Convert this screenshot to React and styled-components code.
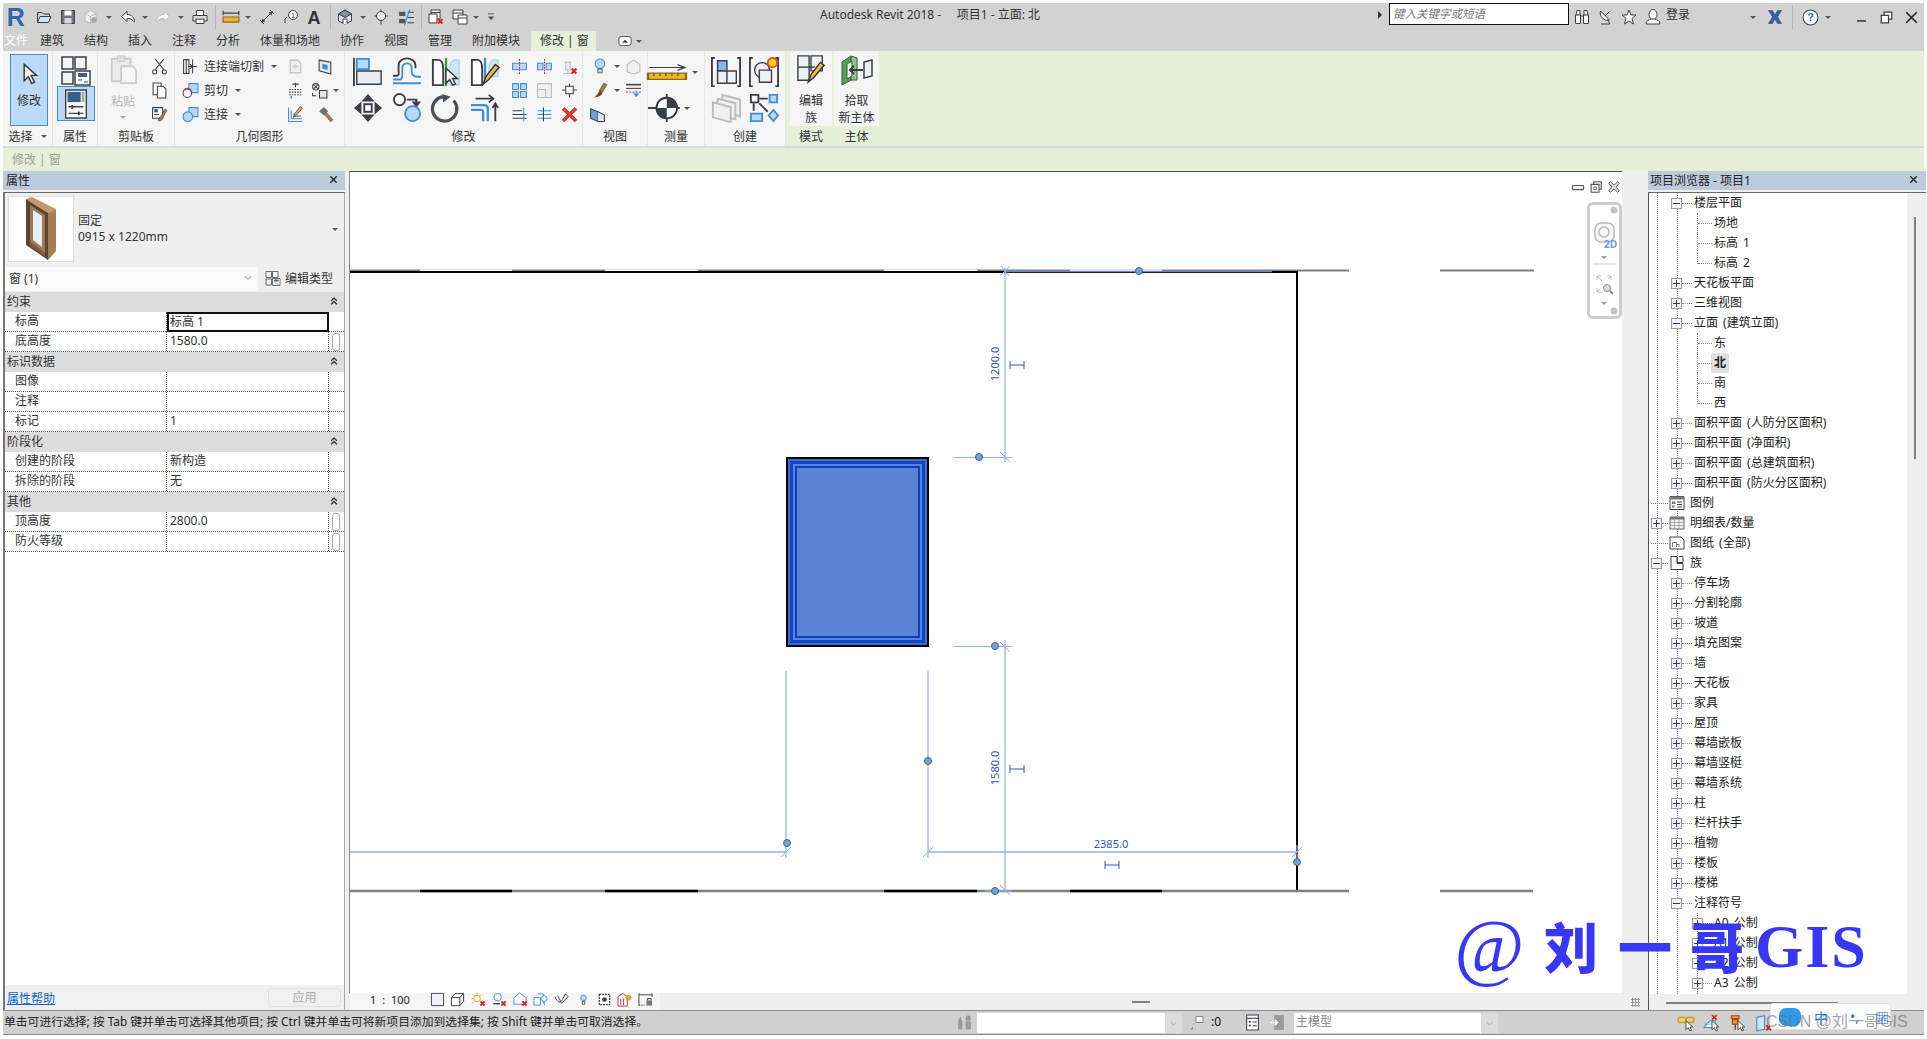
import React from 'react';
import styled, { createGlobalStyle } from 'styled-components';
import { ChevronDown, ChevronsUp, X } from 'lucide-react';

const FONT = `"Noto Sans", "Noto Sans CJK SC", sans-serif`;
const D = '#3c4046';
const B = '#3f8fd8';
const LB = '#b9d8f2';

const Global = createGlobalStyle`
  html, body { margin: 0; padding: 0; background: #fff; overflow: hidden; }
  body { font-family: ${FONT}; font-size: 12px; color: #222; }
  * { box-sizing: border-box; }
`;

const line = { fill: 'none', stroke: D, strokeWidth: 2 };
const box = { fill: '#fff', stroke: D, strokeWidth: 2 };
const blue = { fill: LB, stroke: B, strokeWidth: 2 };
const gray = { fill: '#f0f0f0', stroke: '#bbb', strokeWidth: 2 };
const cross = <path d="M20 20l9 9M29 20l-9 9" stroke="#e02424" strokeWidth="4" fill="none" />;
const pencil = <path d="M14 29l3-8L27 8l4 3-11 13z" fill="#f4b942" stroke="#333" strokeWidth="1.5" />;
const cur = <path d="M16 12v16l4-4 3 6 3-1-3-6h5z" fill="#fff" stroke="#333" strokeWidth="1.5" />;

const ICONS = {
  R: <text x="1" y="30" fontSize="40" fontWeight="700" fill="#2f6aa8" fontFamily="Liberation Sans">R</text>,
  open: <><path d="M3 27V7h9l3 3h12v5" {...line} /><path d="M3 27l5-12h22l-5 12z" fill="#d5e3ef" stroke={D} strokeWidth="2" /></>,
  save: <><path d="M3 3h26v26H3z" fill="#6f747a" stroke={D} strokeWidth="2" /><path d="M9 3h14v10H9z" fill="#fff" /><path d="M9 18h14v11H9z" fill="#d8d8d8" /></>,
  sync: <><path d="M15 3l11 6v14l-11 6-11-6V9z" {...gray} /><path d="M15 15l11-6M15 15L4 9M15 15v14" {...gray} /><circle cx="22" cy="22" r="6" fill="#aaa" /></>,
  undo: <path d="M14 5L3 15l11 10v-6c6 0 10 1 15 7 0-9-6-15-15-15z" {...box} />,
  redo: <path d="M18 5l11 10-11 10v-6c-6 0-10 1-15 7 0-9 6-15 15-15z" fill="#fff" stroke="#bbb" strokeWidth="2" />,
  print: <><path d="M9 13V3h14v10" {...box} /><path d="M2 13h28v11H2z" fill="#d8dde2" stroke={D} strokeWidth="2" /><path d="M8 20h16v9H8z" {...box} /></>,
  measure: <><path d="M2 9h28M2 5v8M30 5v8" {...line} /><path d="M2 16h28v9H2z" fill="#eab72c" stroke="#8a6a10" strokeWidth="2" /></>,
  dim: <><path d="M5 27L27 5" {...line} /><path d="M27 5l-8 2 6 6zM5 27l8-2-6-6z" fill={D} /><path d="M2 22l8 8M22 2l8 8" {...line} /></>,
  tag: <><path d="M4 28v-8l4-4" {...line} /><circle cx="20" cy="12" r="9" {...box} /><text x="20" y="17" fontSize="14" textAnchor="middle" fill={D} fontFamily="Liberation Sans">1</text></>,
  A: <text x="16" y="29" fontSize="36" fontWeight="700" textAnchor="middle" fill="#333" fontFamily="Liberation Sans">A</text>,
  house: <><path d="M16 2L3 10v14l13 6 13-6V10z" fill="#e2e6ea" stroke={D} strokeWidth="2" /><path d="M16 2L3 10l13 7 13-7z" fill="#8a9096" stroke={D} strokeWidth="2" /><path d="M12 30V20h8v10" {...box} /></>,
  section: <><circle cx="16" cy="14" r="9" fill="#e8e8e8" stroke={D} strokeWidth="2" /><path d="M16 1v4M16 23v8M2 14h4M26 14h4" {...line} /></>,
  thin: <><path d="M2 5h12v8H2zM2 19h12v8H2z" fill="#555" /><path d="M18 6h12M18 16h12M18 26h12" {...line} /><path d="M12 31L22 1" stroke={B} strokeWidth="2" /></>,
  closeHid: <><path d="M6 2h18v18H6z" {...box} /><path d="M6 7h18" {...line} /><path d="M2 10h16v18H2z" {...box} />{cross}</>,
  switchW: <><path d="M2 2h20v18H2z" {...box} /><path d="M2 8h20" {...line} /><path d="M12 12h18v18H12z" {...box} /><path d="M12 18h18" {...line} /></>,
  customize: <><path d="M6 6h20" stroke="#555" strokeWidth="3" /><path d="M6 14h20L16 26z" fill="#555" /></>,
  tabMin: <><rect x="2" y="6" width="28" height="20" rx="5" {...box} /><path d="M9 20l7-7 7 7z" fill={D} /></>,

  cursor: <path d="M9 2v24l6-6 5 10 4-2-5-10h8z" fill="#fff" stroke="#333" strokeWidth="2" />,
  typeProps: <><path d="M2 3h11v12H2zM15 3h11v12H15zM2 18h11v12H2z" fill="#f3f3f3" stroke={D} strokeWidth="1.5" /><path d="M15 17h15v14H15z" fill="#fff" stroke={D} strokeWidth="1.5" /><path d="M18 19h9v4h-9z" fill="#3a5e8c" /><path d="M18 26h4M24 28h4" stroke={D} /></>,
  propsPanel: <><path d="M5 1h22v30H5z" fill="#fff" stroke={D} strokeWidth="1.5" /><path d="M7 3h14v11H7z" fill="#3a5e8c" /><path d="M22 3h3v11h-3z" fill="#aaa" /><path d="M8 19h16M8 26h16" stroke={D} strokeWidth="1.5" /><path d="M12 17v4M19 24v4" stroke={D} strokeWidth="2" /></>,
  paste: <><path d="M4 5h20v24H4z" fill="#ececec" stroke="#ccc" strokeWidth="2" /><path d="M10 2h8v6h-8z" fill="#ddd" stroke="#ccc" /><path d="M14 13h12l4 4v14H14z" fill="#f6f6f6" stroke="#ccc" strokeWidth="2" /></>,
  scissors: <><path d="M8 2l16 20M24 2L8 22" {...line} /><circle cx="7" cy="26" r="4" {...box} /><circle cx="25" cy="26" r="4" {...box} /></>,
  copy: <><path d="M4 2h15v22H4z" {...box} /><path d="M12 8h11l5 5v17H12z" {...box} /></>,
  match: <><path d="M3 3h19v20H3z" {...box} /><path d="M6 6h7v6H6z" fill="#3a5e8c" /><path d="M6 16h9" {...line} /><path d="M14 28c4 1 7-1 8-5L30 8l-4-2-8 14c-3 1-4 4-4 8z" fill="#a9794a" stroke="#333" /></>,
  joinCut: <><path d="M3 3h10v26H3zM8 3v26" {...line} /><path d="M20 3v26M12 16h16M20 16l-5-4M20 16l-5 4" {...line} /></>,
  cutGeom: <><path d="M13 3h17v17H13z" {...blue} /><circle cx="10" cy="21" r="8" {...box} /><path d="M4 15a8 8 0 0 1 14 3" stroke="#e02424" strokeWidth="2.5" fill="none" /></>,
  joinGeom: <><path d="M13 3h17v17H13z" {...blue} /><circle cx="11" cy="20" r="9" {...blue} /></>,
  grayCut: <><path d="M6 4h14l6 6v18H6z" {...gray} /><path d="M22 16H12l4-4M12 16l4 4" stroke="#ccc" strokeWidth="2" fill="none" /></>,
  wallOpen: <><path d="M4 4l22 4v22L4 24z" fill="#dfe6ec" stroke={D} strokeWidth="2" /><path d="M10 11l10 2v9l-10-2z" fill={B} /></>,
  beam: <><path d="M16 2v8M10 4h12" stroke={D} strokeWidth="2" /><path d="M4 14h24M4 19h24M4 24h24" stroke={D} strokeWidth="2" strokeDasharray="3 2" /><path d="M8 26v5" stroke={B} strokeWidth="3" /></>,
  cutSwitch: <><circle cx="9" cy="9" r="6" {...box} /><path d="M5 5l8 8M13 5l-8 8" {...line} /><path d="M16 16h14v14H16z" fill="#e5e5e5" stroke={D} strokeWidth="2" /><path d="M3 20v6h7" {...line} /></>,
  wallPen: <><path d="M3 3v26h26" stroke={B} strokeWidth="2" fill="none" /><path d="M8 8v16h20M13 14v5h14" stroke={B} strokeWidth="2" fill="none" /><g transform="translate(-2,-7)">{pencil}</g></>,
  hammer: <><path d="M4 10l9-8 8 8-8 8z" fill="#6a6f75" /><path d="M14 16l4-4 12 14-4 4z" fill="#b0764a" stroke="#555" /></>,

  align: <><path d="M1 1v30" {...line} /><path d="M4 2h13v11H4z" {...blue} /><path d="M4 15h26v14H4z" fill="#e7ecf0" stroke={D} strokeWidth="1.5" /></>,
  offset: <><path d="M1 28h30M1 24h7c3 0 3-3 3-6v-6c0-7 10-7 10 0v3c0 5 3 6 6 6h4" stroke={B} strokeWidth="2" fill="none" /><path d="M1 20h4c3 0 2-3 2-6V9c0-10 18-10 18 0v3" stroke={D} strokeWidth="2" fill="none" /></>,
  mirrorPick: <><path d="M2 3h6c5 0 5 6 5 10v17H2z" {...box} /><path d="M16 1v30" stroke="#3f9a3f" strokeWidth="2.5" /><path d="M30 3h-6c-3 2-4 6-4 10v17h10z" fill="#cfe3f3" stroke="#9cc" />{cur}</>,
  mirrorDraw: <><path d="M2 3h6c5 0 5 6 5 10v17H2z" {...box} /><path d="M16 1v24" stroke={B} strokeWidth="2.5" /><path d="M30 3h-6c-3 2-4 6-4 10v8h10z" fill="#cfe3f3" stroke="#9cc" />{pencil}</>,
  split1: <><path d="M3 10h26v12H3z" {...blue} /><path d="M16 2v28" stroke="#e02424" strokeWidth="2" strokeDasharray="3 2" /></>,
  split2: <><path d="M3 10h10v12H3zM19 10h10v12H19z" {...blue} /><path d="M16 2v28" stroke="#e02424" strokeWidth="2" strokeDasharray="3 2" /></>,
  unpinG: <><path d="M6 8h14M9 8v14h8V8M13 22v7M4 29h18" {...gray} />{cross}</>,
  array: <path d="M3 3h11v11H3zM18 3h11v11H18zM3 18h11v11H3zM18 18h11v11H18z" {...blue} />,
  scale: <><path d="M3 3h26v26H3z" {...gray} /><path d="M3 14h15v15" {...gray} /></>,
  pin: <><path d="M9 8h14v14H9z" {...box} /><path d="M2 15h7M23 15h7M16 3v5M16 22v7" {...line} /></>,
  trim1: <><path d="M3 9h18M3 16h26M3 23h26" stroke={D} strokeWidth="2" /><path d="M24 3v26" stroke={B} strokeWidth="2" /></>,
  trim2: <><path d="M3 9h26M3 16h26M3 23h26" stroke={B} strokeWidth="2" /><path d="M14 3v26" stroke={D} strokeWidth="2" /></>,
  del: <path d="M6 3l10 9 10-9 4 4-10 9 10 10-4 4-10-10L6 30l-4-4 10-10L2 7z" fill="#ea3535" stroke="#a01010" />,
  move: <><path d="M16 1l7 8H9zM16 31l-7-8h14zM1 16l8-7v14zM31 16l-8 7V9z" fill={D} /><path d="M12 12h8v8h-8z" {...box} /></>,
  copyShape: <><circle cx="8" cy="7" r="6" {...box} /><path d="M16 7h10v5M26 14l-3-4h6z" {...line} /><circle cx="22" cy="22" r="8" {...blue} /></>,
  rotate: <><path d="M24 8a13 13 0 1 1-11-4" stroke="#4a4f55" strokeWidth="3.5" fill="none" /><path d="M12 1l9 3-8 6z" fill="#4a4f55" /></>,
  trimBig: <><path d="M1 13h14c3 0 4 1 4 4v13M1 18h11c2 0 2 1 2 3v9" stroke={B} strokeWidth="2.5" fill="none" /><path d="M6 6h18M20 2l5 4-5 4" {...line} /><path d="M27 30V12M24 16l3-5 3 5" {...line} /></>,
  bulb: <><circle cx="15" cy="11" r="9" {...blue} /><path d="M11 21h8v7h-8z" fill="#ddd" stroke={D} strokeWidth="1.5" /></>,
  gear3d: <path d="M4 12l12-8 12 8v14l-12 4-12-4z" {...gray} />,
  paint: <><path d="M22 2l6 3-8 14-6-3z" fill="#a9794a" stroke="#333" /><path d="M14 16l6 3c-1 7-8 10-16 10 4-3 7-6 10-13z" fill="#6b4a2a" /></>,
  lines: <><path d="M2 5h28" stroke={D} strokeWidth="3" /><path d="M2 12h28" stroke={D} strokeWidth="2" /><path d="M2 19h28" stroke={D} strokeWidth="1.5" strokeDasharray="4 2" /><path d="M21 16v10M16 22l5 6 5-6z" fill={B} stroke={B} /></>,
  viewRange: <><path d="M3 5l14 6v18L3 23z" fill="#6aa2d4" stroke={D} strokeWidth="2" /><path d="M17 11l12 6v12l-12 0" fill="#dfe6ec" stroke={D} strokeWidth="2" /></>,
  alignDim: <><path d="M1 8h30M25 3l6 5-6 5" {...line} /><path d="M0 18h32v11H0z" fill="#eab72c" stroke="#8a6a10" strokeWidth="2" /><path d="M5 18v5M10 18v5M15 18v5M20 18v5M25 18v5" stroke="#8a6a10" strokeWidth="1.5" /></>,
  spot: <><circle cx="20" cy="16" r="11" fill="#fff" stroke="#333" strokeWidth="2" /><path d="M20 5a11 11 0 0 1 11 11H20zM20 16v11A11 11 0 0 1 9 16z" fill="#3a4048" /><path d="M0 16h9M31 16h3M20 1v4M20 27v4" {...line} /></>,
  group: <><path d="M4 1H1v30h3M28 1h3v30h-3" {...line} /><path d="M7 4h10v11H7z" fill="#7fb9e6" stroke={D} strokeWidth="1.5" /><path d="M7 15h10v13H7zM17 15h10v13H17z" fill="#eef1f3" stroke={D} strokeWidth="1.5" /></>,
  compon: <><path d="M4 1H1v30h3M28 1h3v30h-3" {...line} /><circle cx="14" cy="14" r="8" fill="#f0f0f0" stroke={D} strokeWidth="1.5" /><path d="M11 14h13v13H11z" fill="#eef1f3" stroke={D} strokeWidth="1.5" /><circle cx="25" cy="6" r="5" fill="#f9d423" stroke="#e84a1a" strokeWidth="2" /></>,
  stack: <><path d="M12 2l19 5v18L12 20z" {...gray} /><path d="M7 6l19 5v17L7 24z" {...gray} /><path d="M2 10l19 5v16L2 26z" {...gray} /></>,
  groupFlow: <><path d="M2 2h8v8H2z" {...box} /><path d="M22 2h8v8h-8z" {...blue} /><path d="M11 6h9M5 11v8M11 11l9 9" {...line} /><path d="M2 22h12v8H2z" {...blue} /><path d="M26 18l5 6-5 6-5-6z" {...blue} /></>,
  editFam: <><path d="M2 2h12v26H2zM16 2h12v16H16z" fill="#eef1f3" stroke={D} strokeWidth="1.5" /><path d="M2 14h18" stroke={D} strokeWidth="1.5" /><g transform="translate(-1,1)">{pencil}</g></>,
  pickHost: <><path d="M1 8l9-6v24l-9 5z" fill="#5aa05a" stroke="#2d602d" /><path d="M10 2l6 2v22l-6 0z" fill="#8cc68c" stroke="#2d602d" /><path d="M6 10l5-3v15l-5 3z" fill="#fff" stroke="#2d602d" /><path d="M22 16H9M13 12l-4 4 4 4" {...line} /><path d="M23 8l8-2v16l-8 2z" fill="#eef1f3" stroke={D} strokeWidth="1.5" /></>,

  binoc: <><path d="M4 12l2-9h6v9zM20 12V3h6l2 9z" fill="#fff" stroke={D} strokeWidth="2" /><path d="M3 12h10v17H3zM19 12h10v17H19z" fill="#fff" stroke={D} strokeWidth="2" /><path d="M13 14h6" {...line} /></>,
  sat: <><path d="M7 4l18 18c-9 4-22-8-18-18z" fill="#fff" stroke={D} strokeWidth="2" /><path d="M16 14l9-9M8 30h18l-5-9" {...line} /></>,
  star: <path d="M16 2l4 10h10l-8 7 3 11-9-6-9 6 3-11-8-7h10z" {...box} />,
  user: <><ellipse cx="16" cy="11" rx="8" ry="10" {...box} /><path d="M2 30c0-7 6-8 10-10h8c4 2 10 3 10 10z" {...box} /></>,
  xchange: <path d="M3 3h8l5 9 5-9h8l-8 13 8 13h-8l-5-9-5 9H3l8-13z" fill="#3b5ea8" stroke="#1f3a78" />,
  help: <><circle cx="16" cy="16" r="14" fill="#fff" stroke={D} strokeWidth="2" /><text x="16" y="23" fontSize="20" fontWeight="700" textAnchor="middle" fill="#2a6cc4" fontFamily="Liberation Sans">?</text></>,
  minW: <path d="M3 26h26" stroke="#222" strokeWidth="4" />,
  restore: <><path d="M10 3h19v17H10z" {...box} strokeWidth="3" /><path d="M3 11h18v18H3z" {...box} strokeWidth="3" /></>,
  closeW: <path d="M3 3l26 26M29 3L3 29" stroke="#222" strokeWidth="4" />,

  cMin: <rect x="1" y="12" width="30" height="11" rx="2" fill="#f4f4f4" stroke="#555" strokeWidth="3" />,
  cRestore: <><path d="M10 2h20v20H10z" fill="#f4f4f4" stroke="#555" strokeWidth="3" /><path d="M3 9h21v21H3z" fill="#f4f4f4" stroke="#555" strokeWidth="3" /><path d="M10 16h7v7h-7z" fill="none" stroke="#555" strokeWidth="2" /></>,
  cClose: <path d="M6 2l10 9 10-9 4 4-9 10 9 10-4 4-10-9-10 9-4-4 9-10-9-10z" fill="#e4e4e4" stroke="#555" strokeWidth="2.5" />,

  legend: <><path d="M2 3h28v26H2z" {...box} /><path d="M2 3h28v6H2z" fill="#777" /><path d="M6 13h7v5H6zM6 21h5v4H6z" fill="#777" /><path d="M16 14h10M16 19h10M16 24h10" {...line} /></>,
  sched: <><path d="M2 4h28v24H2z" fill="#eee" stroke="#666" strokeWidth="2" /><path d="M2 4h28v5H2z" fill="#777" /><path d="M2 15h28M2 21h28M11 9v19M20 9v19" stroke="#999" strokeWidth="1.5" /></>,
  sheet: <><path d="M2 4h22l6 6v18H2z" {...box} /><path d="M7 24v-9h8v9M15 19h5v5" stroke="#777" strokeWidth="2" fill="none" /></>,
  family: <><path d="M6 3h10v12h12V3h-8" {...line} /><path d="M4 3h12v14h12v12H4z" fill="#fff" stroke={D} strokeWidth="2" /></>,

  tools: <><path d="M4 14l4-10 4 10v15H4zM18 14h10v15H18z" fill="#999" /><circle cx="23" cy="8" r="5" fill="#999" /></>,
  worksets: <><path d="M14 3h14v12H14z" fill="#fff" stroke="#888" strokeWidth="2" /><path d="M14 15l-6 8v6H2l6-6z" fill="#888" /></>,
  modelList: <><path d="M5 2h22v28H5z" {...box} /><path d="M5 8h22" {...line} /><path d="M9 13h4v3H9zM9 20h4v3H9z" fill={D} /><path d="M16 15h8M16 22h8" {...line} /></>,
  door: <><path d="M10 2h18v28H10z" fill="#999" /><path d="M2 16h14M11 11l5 5-5 5" stroke="#fff" strokeWidth="3" fill="none" /></>,
  tr1: <><rect x="2" y="6" width="14" height="9" rx="4" fill="none" stroke="#d8a800" strokeWidth="3" /><rect x="16" y="6" width="14" height="9" rx="4" fill="none" stroke="#d8a800" strokeWidth="3" />{cur}</>,
  tr2: <><path d="M2 24l10-12h10v12z" fill="#fff" stroke={B} strokeWidth="2" /><path d="M2 18h20" stroke={B} /><path d="M16 2l8 8M24 2l-8 8" stroke="#e02424" strokeWidth="3" />{cur}</>,
  tr3: <><path d="M4 3h14v5H4zM6 10h10v8H6z" fill="#f0a030" stroke="#b04010" strokeWidth="2" /><path d="M11 18v10" stroke="#333" strokeWidth="2" />{cur}</>,
  tr4: <><path d="M3 6l14-3v24l-14 3z" fill="#cfe3f3" stroke={B} strokeWidth="2" />{cross}</>,

  vDetail: <><path d="M3 3h26v26H3z" fill="#eef2f6" stroke={D} strokeWidth="2" /></>,
  vCube: <><path d="M3 12h18v17H3z" {...box} /><path d="M3 12l8-9h18l-8 9M29 3v17l-8 9" {...line} /></>,
  vSun: <><circle cx="13" cy="14" r="7" fill="#fff" stroke="#e8a000" strokeWidth="2" /><path d="M13 1v4M1 14h4M4 5l3 3M22 5l-3 3M4 23l3-3" stroke="#e8a000" strokeWidth="2" />{cross}</>,
  vShadow: <><circle cx="12" cy="11" r="8" fill="#fff" stroke={B} strokeWidth="2" /><path d="M3 25h14" stroke={D} strokeWidth="3" />{cross}</>,
  vCrop: <><path d="M2 12L14 2l14 10v14H2z" fill="#fff" stroke={B} strokeWidth="2" />{cross}</>,
  vCrop2: <><path d="M2 12h14v16H2z" fill="#fff" stroke={B} strokeWidth="2" /><path d="M10 4h12v20" stroke={B} strokeWidth="2" fill="none" /><circle cx="24" cy="14" r="6" fill="#fff" stroke={B} strokeWidth="2" /><path d="M24 20v8" stroke={B} strokeWidth="2" /></>,
  vPath: <path d="M2 10c6 14 12 14 16 6l6-12 6 6-14 14L8 8" {...line} />,
  vBulb: <><circle cx="16" cy="12" r="7" {...blue} /><path d="M13 20h6v8h-6z" {...box} /></>,
  vRender: <><path d="M5 5h22v22H5z" fill="#fff" stroke={D} strokeWidth="3" strokeDasharray="4 2" /><circle cx="16" cy="16" r="5" fill={D} /></>,
  vHide: <><path d="M2 30V10l10-7 10 7v20z" fill="#fff" stroke="#c03030" strokeWidth="2" /><path d="M8 14v14M14 14v14" stroke="#c03030" strokeWidth="2" /><circle cx="24" cy="12" r="6" fill="#f0a030" /></>,
  vLock: <><path d="M2 3v26M30 3v8M2 6h28" stroke={D} strokeWidth="2" /><path d="M2 28h12" stroke={D} strokeWidth="2" strokeDasharray="3 2" /><path d="M18 18h12v11H18z" fill="#777" /><path d="M20 18v-4h8v4" {...line} /></>,
};

const Svg = styled.svg`
  display: block;
  flex: none;
  overflow: visible;
`;
const Ic = ({ n, w = 16, h, stretch }) => (
  <Svg width={w} height={h || w} viewBox="0 0 32 32" preserveAspectRatio={stretch ? 'none' : undefined}>
    {ICONS[n]}
  </Svg>
);
const Tri = styled.i`
  display: block;
  flex: none;
  width: 0;
  height: 0;
  border-left: 3px solid transparent;
  border-right: 3px solid transparent;
  border-top: 3px solid ${p => p.$c || '#555'};
`;

const Strip = styled.div`
  display: flex;
  align-items: center;
  height: ${p => p.$h || 28}px;
`;
const Slot = styled.div`
  flex: none;
  display: flex;
  align-items: center;
  justify-content: center;
  width: ${p => p.$w}px;
  margin-left: ${p => p.$ml}px;
`;
const Sep = styled.div`
  width: 1px;
  height: 24px;
  background: #b4b4b4;
`;
const IconStrip = ({ start, items, h }) => {
  let end = start;
  return (
    <Strip $h={h}>
      {items.map(([cx, n, w = 16, ih], i) => {
        const ml = cx - w / 2 - end;
        end = cx + w / 2;
        return (
          <Slot key={i} $w={w} $ml={ml}>
            {n === 'dd' ? <Tri /> : n === 'sep' ? <Sep /> : <Ic n={n} w={w} h={ih} />}
          </Slot>
        );
      })}
    </Strip>
  );
};

const Frame = styled.div`
  position: relative;
  width: 1927px;
  height: 1039px;
  padding: 3px 3px 3px 3px;
  background: #fff;
  overflow: hidden;
`;
const TitleBar = styled.div`
  position: relative;
  height: 28px;
  display: flex;
  align-items: center;
  background: #d2d2d2;
`;
const Title = styled.div`
  position: absolute;
  left: 817px;
  top: 2px;
  white-space: pre;
  font-size: 12px;
  line-height: 20px;
  color: #333;
`;
const SearchArrow = styled.i`
  position: absolute;
  left: 1375px;
  top: 8px;
  border-left: 4px solid #333;
  border-top: 4px solid transparent;
  border-bottom: 4px solid transparent;
`;
const Search = styled.div`
  position: absolute;
  left: 1386px;
  top: 0;
  width: 180px;
  height: 22px;
  border: 1px solid #111;
  background: #fff;
  padding-left: 3px;
  font-style: italic;
  font-size: 11.5px;
  line-height: 20px;
  color: #777;
`;
const Login = styled.span`
  position: absolute;
  left: 1663px;
  top: 2px;
  line-height: 20px;
  color: #333;
`;
const Tabs = styled.div`
  height: 20px;
  display: flex;
  background: #d2d2d2;
  padding-left: 1px;
`;
const Tab = styled.div`
  width: ${p => p.$w}px;
  flex: none;
  line-height: 20px;
  font-size: 12px;
  white-space: pre;
  color: ${p => (p.$file ? '#fff' : '#333')};
  background: ${p => (p.$on ? '#e6efd8' : 'transparent')};
  padding-left: ${p => (p.$on ? 9 : 0)}px;
`;
const TabExtra = styled.div`
  display: flex;
  align-items: center;
  gap: 4px;
  margin-left: 22px;
`;
const Ribbon = styled.div`
  display: flex;
  height: 95px;
  background: #e6efd8;
`;
const Panel = styled.div`
  flex: none;
  width: ${p => p.$w}px;
  margin-left: ${p => p.$ml || 0}px;
  display: flex;
  flex-direction: column;
  background: #f5f5f5;
  border-right: ${p => (p.$ctx ? 'none' : '1px solid #e6e6e6')};
`;
const PanelBody = styled.div`
  height: 75px;
  display: flex;
  padding: 3px 0 0 ${p => p.$pl || 0}px;
`;
const PanelLabel = styled.div`
  height: 20px;
  display: flex;
  align-items: center;
  justify-content: center;
  gap: 8px;
  font-size: 12px;
  color: #333;
  background: ${p => (p.$ctx ? '#e6efd8' : 'transparent')};
`;
const BigBtn = styled.div`
  width: ${p => p.$w}px;
  height: ${p => p.$h}px;
  display: flex;
  flex-direction: column;
  align-items: center;
  justify-content: ${p => (p.$center ? 'center' : 'flex-start')};
  padding-top: ${p => (p.$center ? 0 : 8)}px;
  gap: 6px;
  margin-left: ${p => p.$ml || 0}px;
  background: ${p => (p.$on ? '#bcd9f5' : 'transparent')};
  border: 1px solid ${p => (p.$on ? '#3f8fd8' : 'transparent')};
  color: #333;
`;
const StackCol = styled.div`
  display: flex;
  flex-direction: column;
  align-items: center;
  width: ${p => p.$w}px;
  flex: none;
`;
const TextBtn = styled.div`
  display: flex;
  flex-direction: column;
  align-items: center;
  line-height: 17px;
  margin-top: ${p => p.$mt || 0}px;
  color: ${p => (p.$dis ? '#b5b5b5' : '#333')};
`;
const DisTri = styled(Tri)`
  margin-top: 6px;
`;
const TextTri = styled(Tri)`
  margin-left: 2px;
`;
const ToolCol = styled.div`
  flex: none;
  width: ${p => p.$w}px;
  margin-left: ${p => p.$ml || 0}px;
  display: flex;
  flex-direction: column;
`;
const ToolRow = styled.div`
  height: 24px;
  display: flex;
  align-items: center;
  justify-content: ${p => (p.$left ? 'flex-start' : 'center')};
  gap: ${p => p.$gap ?? 5}px;
  white-space: nowrap;
  color: #333;
`;
const BigGrid = styled.div`
  flex: none;
  display: grid;
  grid-template-columns: repeat(${p => p.$cols}, ${p => p.$cw}px);
  grid-auto-rows: 36px;
  align-items: center;
  justify-items: ${p => p.$ji || 'center'};
`;
const BigCell = styled.div`
  display: flex;
  align-items: center;
  gap: 6px;
`;
const Options = styled.div`
  height: 25px;
  background: #e6efd8;
  border-top: 2px solid #d8d8d8;
  padding-left: 9px;
  line-height: 23px;
  font-size: 12px;
  color: #a0a0a0;
  white-space: pre;
`;
const Main = styled.div`
  height: 839px;
  display: flex;
  background: #efefef;
`;
const Dock = styled.div`
  flex: none;
  width: ${p => p.$w}px;
  display: flex;
  flex-direction: column;
  height: 839px;
`;
const DockHead = styled.div`
  height: 19px;
  flex: none;
  display: flex;
  align-items: center;
  justify-content: space-between;
  padding: 0 ${p => p.$pr}px 2px ${p => p.$pl || 4}px;
  background: #bccbdb;
  font-size: 12px;
  color: #222;
`;
const PropsBody = styled.div`
  flex: 1;
  min-height: 0;
  margin-top: 2px;
  border-top: 1px solid #666;
  border-left: 2px solid #777;
  border-right: 1px solid #aaa;
  display: flex;
  flex-direction: column;
  background: #fff;
`;
const TypeSel = styled.div`
  height: 72px;
  flex: none;
  display: flex;
  align-items: center;
  padding: 0 6px 0 3px;
  gap: 4px;
  background: #efefef;
`;
const Thumb = styled.div`
  width: 66px;
  height: 66px;
  background: #fff;
  border: 1px solid #ddd;
  display: flex;
  align-items: center;
  justify-content: center;
`;
const TypeName = styled.div`
  flex: 1;
  line-height: 16px;
  padding-left: 0;
  color: #333;
`;
const FilterRow = styled.div`
  height: 27px;
  flex: none;
  display: flex;
  align-items: flex-start;
  background: #efefef;
  padding-top: 2px;
`;
const FilterSel = styled.div`
  width: 253px;
  height: 24px;
  background: #fafafa;
  display: flex;
  align-items: center;
  justify-content: space-between;
  padding: 0 4px 2px;
  color: #333;
`;
const EditType = styled.div`
  display: flex;
  align-items: center;
  gap: 4px;
  margin-left: 7px;
  height: 22px;
  color: #333;
`;
const GroupRow = styled.div`
  height: 20px;
  flex: none;
  display: flex;
  align-items: center;
  justify-content: space-between;
  padding: 0 4px 2px 2px;
  background: #dcdcdc;
  color: #333;
`;
const PropRow = styled.div`
  height: 20px;
  flex: none;
  display: grid;
  grid-template-columns: 162px 162px 13px;
  border-bottom: 1px dotted #555;
  color: #333;
`;
const NameCell = styled.div`
  padding-left: 10px;
  line-height: 17px;
  border-right: 1px dotted #555;
`;
const ValCell = styled.div`
  padding-left: ${p => (p.$active ? 1 : 3)}px;
  line-height: ${p => (p.$active ? 15 : 17)}px;
  border-right: 1px dotted #555;
  ${p => p.$active && 'border: 2px solid #111; height: 20px; background:#fff;'}
`;
const KnobCell = styled.div`
  display: flex;
  align-items: center;
  justify-content: center;
`;
const Knob = styled.div`
  width: 8px;
  height: 18px;
  border: 1px solid #aaa;
  border-radius: 3px;
  background: #fff;
`;
const PropsSpacer = styled.div`
  flex: 1;
  background: #fff;
`;
const PropsFoot = styled.div`
  height: 25px;
  flex: none;
  display: flex;
  align-items: center;
  justify-content: space-between;
  padding: 0 3px 0 2px;
  background: #f0f0f0;
`;
const HelpLink = styled.span`
  color: #0a66c8;
  text-decoration: underline;
`;
const Apply = styled.div`
  width: 73px;
  height: 19px;
  border: 1px solid #e2e2e2;
  border-radius: 3px;
  text-align: center;
  line-height: 17px;
  color: #aaa;
`;
const CanvasCol = styled.div`
  flex: none;
  width: 1301px;
  margin-left: 2px;
  display: flex;
  flex-direction: column;
`;
const Canvas = styled.div`
  position: relative;
  margin-left: 2px;
  width: 1273px;
  height: 822px;
  background: #fff;
  border-top: 1px solid #555;
  border-left: 1px solid #888;
`;
const ViewBar = styled.div`
  height: 17px;
  display: flex;
  align-items: center;
  margin-left: 3px;
  position: relative;
`;
const ViewLeft = styled.div`
  width: 310px;
  height: 17px;
  padding-bottom: 4px;
  background: #f6f6f6;
  display: flex;
  align-items: center;
  font-size: 11px;
  color: #222;
  white-space: pre;
`;
const ScaleText = styled.span`
  width: 78px;
  padding-left: 20px;
  flex: none;
  word-spacing: 3px;
`;
const MiniDash = styled.div`
  width: 18px;
  height: 2px;
  background: #808080;
  margin-left: 472px;
`;
const Grip = styled.div`
  position: absolute;
  right: 8px;
  top: 5px;
  width: 9px;
  height: 9px;
  background-image: radial-gradient(#999 1px, transparent 1.2px);
  background-size: 3px 3px;
`;
const WinCtl = styled.div`
  position: absolute;
  right: 2px;
  top: 9px;
  display: flex;
  align-items: center;
  gap: 6px;
`;
const NavBar = styled.div`
  position: absolute;
  right: 0;
  top: 30px;
  width: 35px;
  height: 117px;
  border: 3px solid #ccc;
  border-radius: 6px;
  background: #fff;
`;
const BrowserBody = styled.div`
  flex: 1;
  min-height: 0;
  margin-top: 2px;
  border-top: 1px solid #666;
  border-left: 1px solid #555;
  display: flex;
  flex-direction: column;
  position: relative;
`;
const BrowserTop = styled.div`
  height: 801px;
  display: flex;
  flex: none;
`;
const Tree = styled.div`
  position: relative;
  width: 258px;
  flex: none;
  background: #fff;
  overflow: hidden;
`;
const VGutter = styled.div`
  flex: 1;
  position: relative;
  background: #efefef;
`;
const VThumb = styled.div`
  position: absolute;
  left: 7px;
  top: 24px;
  width: 2px;
  height: 242px;
  background: #808080;
`;
const HGutter = styled.div`
  flex: 1;
  background: #efefef;
  padding: 8px 0 0 17px;
`;
const HThumb = styled.div`
  width: 172px;
  height: 2px;
  background: #808080;
`;
const Guide = styled.div`
  position: absolute;
  left: ${p => p.$x}px;
  top: ${p => p.$top}px;
  bottom: 0;
  border-left: 1px dotted #888;
`;
const TreeRow = styled.div`
  height: 20px;
  display: flex;
  align-items: center;
  padding-left: ${p => p.$pl}px;
  white-space: pre;
  color: #1c1c1c;
  position: relative;
`;
const Exp = styled.div`
  flex: none;
  width: 11px;
  height: 11px;
  border: 1px solid #999;
  background: #f4f4f4;
  position: relative;
  &::before {
    content: '';
    position: absolute;
    left: 1px;
    right: 1px;
    top: 4px;
    height: 1px;
    background: #2a3c78;
  }
  ${p =>
    p.$plus &&
    `&::after { content: ''; position: absolute; top: 1px; bottom: 1px; left: 4px; width: 1px; background: #2a3c78; }`}
`;
const Conn = styled.div`
  flex: none;
  width: ${p => p.$w}px;
  border-top: 1px dotted #888;
  margin-right: ${p => p.$mr ?? 2}px;
`;
const Leaf = styled.div`
  flex: none;
  align-self: flex-start;
  position: relative;
  width: 15px;
  height: ${p => (p.$last ? 11 : 20)}px;
  border-left: 1px dotted #888;
  margin-right: 2px;
  &::after {
    content: '';
    position: absolute;
    left: 0;
    top: 10px;
    width: 14px;
    border-top: 1px dotted #888;
  }
`;
const Sel = styled.span`
  background: ${p => (p.$on ? '#e0e0e0' : 'transparent')};
  font-weight: ${p => (p.$on ? 700 : 400)};
  line-height: 20px;
  word-spacing: 2px;
  padding: 0 3px 0 ${p => (p.$on ? 3 : 0)}px;
  margin-left: ${p => (p.$on ? -3 : 0)}px;
`;
const Status = styled.div`
  position: relative;
  height: 25px;
  display: flex;
  align-items: center;
  background: #d0d0d0;
  border-top: 1px solid #8c8c8c;
  border-bottom: 1px solid #8c8c8c;
`;
const StatusText = styled.div`
  position: absolute;
  left: 1px;
  top: 0;
  line-height: 21px;
  white-space: pre;
  font-size: 11.8px;
  color: #222;
`;
const StatusInput = styled.div`
  position: absolute;
  top: 2px;
  left: ${p => p.$x}px;
  width: ${p => p.$w}px;
  height: 20px;
  background: #fff;
  padding-left: 2px;
  line-height: 18px;
  color: #888;
`;
const StatusDrop = styled.div`
  position: absolute;
  top: 2px;
  left: ${p => p.$x}px;
  width: 17px;
  height: 20px;
  background: #dcdcdc;
  display: flex;
  align-items: center;
  justify-content: center;
  color: #aaa;
`;
const Zero = styled.span`
  position: absolute;
  left: 1208px;
  top: 0;
  line-height: 21px;
  color: #111;
`;
const Stamp = styled.div`
  position: absolute;
  left: 1454px;
  top: 911px;
  display: flex;
  align-items: center;
  color: #3737f5;
  white-space: pre;
  line-height: 70px;
  height: 70px;
`;
const StampAt = styled.span`
  font-family: "Liberation Serif", serif;
  font-style: italic;
  font-size: 76px;
  line-height: 70px;
  width: 90px;
`;
const StampCn = styled.span`
  font-family: "Noto Sans CJK SC", sans-serif;
  font-weight: 900;
  font-size: 54px;
  line-height: 70px;
  width: ${p => p.$w}px;
  flex: none;
`;
const StampLatin = styled.span`
  font-family: "Liberation Serif", serif;
  font-weight: 700;
  font-size: 62px;
  line-height: 70px;
  letter-spacing: 2px;
`;
const ImeBar = styled.div`
  position: absolute;
  left: 1770px;
  top: 1003px;
  width: 121px;
  height: 27px;
  display: flex;
  align-items: center;
  background: #fff;
  border: 1px solid #e4e4e4;
  border-radius: 3px;
  color: #1677e5;
  font-size: 14px;
`;
const ImeBlob = styled.div`
  width: 22px;
  height: 18px;
  border-radius: 7px;
  background: #2e9bf0;
  margin: 0 13px 0 8px;
`;
const ImeDot = styled.span`
  margin: 0 16px 0 22px;
`;
const Csdn = styled.div`
  position: absolute;
  left: 1766px;
  top: 1009px;
  font-size: 16px;
  line-height: 26px;
  white-space: pre;
  color: rgba(110, 110, 110, 0.65);
  font-family: "Liberation Sans", "Noto Sans CJK SC", sans-serif;
`;
const DrawSvg = styled.svg`
  display: block;
`;

const tabs = [
  ['文件', 36, 1], ['建筑', 44], ['结构', 44], ['插入', 44], ['注释', 44], ['分析', 44], ['体量和场地', 80],
  ['协作', 44], ['视图', 44], ['管理', 44], ['附加模块', 59],
];

const propsData = [
  { g: '约束' },
  { n: '标高', v: '标高 1', active: true },
  { n: '底高度', v: '1580.0', knob: true },
  { g: '标识数据' },
  { n: '图像' },
  { n: '注释' },
  { n: '标记', v: '1' },
  { g: '阶段化' },
  { n: '创建的阶段', v: '新构造' },
  { n: '拆除的阶段', v: '无' },
  { g: '其他' },
  { n: '顶高度', v: '2800.0', knob: true },
  { n: '防火等级', knob: true },
];

const L2 = (t, plus = true) => ({ t, k: 'l2', plus });
const L3 = (t, extra) => ({ t, k: 'l3', ...extra });
const T3 = t => ({ t, k: 't3' });
const L1 = (t, icon, plus) => ({ t, k: 'l1', icon, plus });
const treeData = [
  L2('楼层平面', false), L3('场地'), L3('标高 1'), L3('标高 2', { last: true }),
  L2('天花板平面'), L2('三维视图'), L2('立面 (建筑立面)', false),
  L3('东'), L3('北', { on: true }), L3('南'), L3('西', { last: true }),
  L2('面积平面 (人防分区面积)'), L2('面积平面 (净面积)'), L2('面积平面 (总建筑面积)'), L2('面积平面 (防火分区面积)'),
  L1('图例', 'legend'), L1('明细表/数量', 'sched', true), L1('图纸 (全部)', 'sheet'), L1('族', 'family', false),
  L2('停车场'), L2('分割轮廓'), L2('坡道'), L2('填充图案'), L2('墙'), L2('天花板'), L2('家具'), L2('屋顶'),
  L2('幕墙嵌板'), L2('幕墙竖梃'), L2('幕墙系统'), L2('柱'), L2('栏杆扶手'), L2('植物'), L2('楼板'), L2('楼梯'),
  L2('注释符号', false), T3('A0 公制'), T3('A1 公制'), T3('A2 公制'), T3('A3 公制'),
];

const TreeItem = ({ r }) => {
  if (r.k === 'l2')
    return (
      <TreeRow $pl={22}>
        <Exp $plus={r.plus} />
        <Conn $w={10} />
        <Sel>{r.t}</Sel>
      </TreeRow>
    );
  if (r.k === 'l3')
    return (
      <TreeRow $pl={48}>
        <Leaf $last={r.last} />
        <Sel $on={r.on}>{r.t}</Sel>
      </TreeRow>
    );
  if (r.k === 't3')
    return (
      <TreeRow $pl={43}>
        <Exp $plus />
        <Conn $w={9} />
        <Sel>{r.t}</Sel>
      </TreeRow>
    );
  return (
    <TreeRow $pl={2}>
      {r.plus === undefined ? <Conn $w={17} $mr={1} /> : <><Exp $plus={r.plus} /><Conn $w={6} $mr={1} /></>}
      <Ic n={r.icon} w={16} />
      <Conn $w={0} $mr={5} />
      <Sel>{r.t}</Sel>
    </TreeRow>
  );
};

const DIM = '#8fb0f5';
const DIMT = '#2c55c4';
const Dot = ({ x, y }) => <circle cx={x} cy={y} r="3.5" fill="#6fa3e0" stroke="#56606c" strokeWidth="1" />;
const Tick = ({ x, y }) => <path d={`M${x - 5} ${y + 5}L${x + 5} ${y - 5}`} stroke={DIM} strokeWidth="1" />;
const EqV = ({ x, y }) => <path d={`M${x - 7} ${y - 4}v8M${x + 7} ${y - 4}v8M${x - 7} ${y}h14`} stroke={DIMT} strokeWidth="1" fill="none" />;

const Drawing = () => (
  <DrawSvg width="1272" height="821" viewBox="350 172 1272 821">
    <path d="M350 270.5H1349" stroke="#808080" strokeWidth="2" />
    <path d="M420 270.5H512M605 270.5H698M884 270.5H977M1070 270.5H1162" stroke="#fff" strokeWidth="2" />
    <path d="M350 272H1297" stroke="#000" strokeWidth="2" />
    <path d="M1440 270.5H1534" stroke="#808080" strokeWidth="2" />
    <path d="M1005 271.5H1272" stroke="#5f86da" strokeWidth="1.5" />
    <path d="M1297 271V890" stroke="#000" strokeWidth="2" />
    <path d="M350 891H1349M1440 891H1533" stroke="#808080" strokeWidth="2.5" />
    <path d="M420 891H512M605 891H698M884 891H977M1070 891H1162" stroke="#000" strokeWidth="2.5" />

    <rect x="786" y="457" width="143" height="190" fill="#000" />
    <rect x="788" y="459" width="139" height="186" fill="#3d6cc8" />
    <rect x="790" y="461" width="135" height="182" fill="#0f46c4" />
    <rect x="793" y="464" width="129" height="176" fill="#5b82d4" />
    <rect x="795" y="466" width="125" height="172" fill="#0b3fc4" />
    <rect x="797" y="468" width="121" height="168" fill="#5b82d4" />

    <g stroke={DIM} strokeWidth="1.2" fill="none">
      <path d="M1005 268V462M953 457.5H1012M953 646.5H1012M1005 640V890" />
      <path d="M350 852H786M928 852H1297" strokeWidth="1.5" />
      <path d="M786 671V858M928 671V858M1297 845V858" />
      <path d="M985 891H1012" />
    </g>
    <Tick x={1005} y={271} />
    <path d="M1001 266l8 10M1000 452l10 10M1000 642l10 10M1000 885l10 10" stroke={DIM} strokeWidth="1" />
    <Tick x={786} y={852} /><Tick x={928} y={852} /><Tick x={1297} y={852} />
    <Dot x={1139} y={271} /><Dot x={979} y={457} /><Dot x={995} y={646} /><Dot x={995} y={891} />
    <Dot x={787} y={843} /><Dot x={928} y={761} /><Dot x={1297} y={862} />

    <text x="0" y="0" transform="translate(999 364) rotate(-90)" textAnchor="middle" fontSize="11" fill={DIMT} fontFamily="Noto Sans">1200.0</text>
    <text x="0" y="0" transform="translate(999 768) rotate(-90)" textAnchor="middle" fontSize="11" fill={DIMT} fontFamily="Noto Sans">1580.0</text>
    <text x="1111" y="848" textAnchor="middle" fontSize="11" fill={DIMT} fontFamily="Noto Sans">2385.0</text>
    <EqV x={1017} y={365} /><EqV x={1017} y={769} /><EqV x={1112} y={865} />
  </DrawSvg>
);

const NavArt = () => (
  <DrawSvg width="29" height="111" viewBox="0 0 29 111">
    <circle cx="24" cy="5" r="3.5" fill="#c4c4c4" />
    <rect x="5" y="18" width="19" height="19" rx="6" fill="#f4f4f4" stroke="#bbb" strokeWidth="1.5" />
    <circle cx="14" cy="27" r="5" fill="none" stroke="#bbb" strokeWidth="1.5" />
    <text x="14" y="43" fontSize="10" fontWeight="700" fill="#6f9bd0" fontFamily="Noto Sans">2D</text>
    <path d="M11 51h6l-3 3z" fill="#999" />
    <path d="M3 59h23" stroke="#ccc" />
    <path d="M7 71l5 5M7 71v4M7 71h4M21 71l-3 3M21 71v4M21 71h-4M7 87l3-3M7 87v-4M7 87h4" stroke="#bbb" fill="none" />
    <circle cx="17" cy="83" r="3.5" fill="#ddd" stroke="#888" />
    <path d="M20 86l3 3" stroke="#888" strokeWidth="2" />
    <path d="M11 97h6l-3 3z" fill="#999" />
    <circle cx="24" cy="106" r="3.5" fill="#c4c4c4" />
  </DrawSvg>
);

const WindowThumb = () => (
  <svg width="31" height="64" viewBox="0 0 31 64">
    <path d="M0 2L6 0L30 12L22 16Z" fill="#c49a6c" />
    <path d="M22 16L30 12V54L22 63Z" fill="#a67c52" />
    <path d="M0 2L22 16V63L0 48Z" fill="#5a4530" />
    <path d="M4 8L19 18V56L4 45Z" fill="#9b7a55" />
    <path d="M7 13L16 19V50L7 43Z" fill="#e3f1f7" />
    <path d="M4 45L19 56V60L4 49Z" fill="#7a5c3c" />
  </svg>
);

const qat = [
  [16, 'R', 20, 22], [44, 'open'], [68, 'save'], [91, 'sync'], [109, 'dd', 6], [128, 'undo'], [145, 'dd', 6],
  [163, 'redo'], [181, 'dd', 6], [200, 'print'], [215, 'sep', 1], [231, 'measure', 18], [248, 'dd', 6], [267, 'dim'],
  [291, 'tag'], [314, 'A', 16, 18], [330, 'sep', 1], [345, 'house'], [363, 'dd', 6], [381, 'section'], [406, 'thin', 17],
  [421, 'sep', 1], [436, 'closeHid'], [460, 'switchW'], [476, 'dd', 6], [491, 'customize', 10],
].map(([x, ...r]) => [x - 3, ...r]);
const topRight = [
  [1582, 'binoc'], [1605, 'sat'], [1629, 'star'], [1653, 'user'], [1753, 'dd', 6], [1775, 'xchange'], [1792, 'sep', 1],
  [1810, 'help', 17], [1828, 'dd', 6], [1861, 'minW', 11], [1886, 'restore', 13], [1911, 'closeW', 13],
].map(([x, ...r]) => [x - 3, ...r]);

const Small = ({ n, dd, gap }) => (
  <ToolRow $gap={gap}>
    <Ic n={n} w={17} />
    {dd && <Tri />}
  </ToolRow>
);

export default function App() {
  return (
    <>
      <Global />
      <Frame>
        <TitleBar>
          <IconStrip start={0} items={qat.concat(topRight)} />
          <Title>{'Autodesk Revit 2018 -     项目1 - 立面: 北'}</Title>
          <SearchArrow />
          <Search>键入关键字或短语</Search>
          <Login>登录</Login>
        </TitleBar>
        <Tabs>
          {tabs.map(([t, w, f]) => (
            <Tab key={t} $w={w} $file={f}>{t}</Tab>
          ))}
          <Tab $w={65} $on>{'修改 | 窗'}</Tab>
          <TabExtra>
            <Ic n="tabMin" w={14} />
            <Tri />
          </TabExtra>
        </Tabs>
        <Ribbon>
          <Panel $w={50}>
            <PanelBody>
              <BigBtn $on $w={38} $h={72} $ml={7}>
                <Ic n="cursor" w={22} />
                <span>修改</span>
              </BigBtn>
            </PanelBody>
            <PanelLabel>选择<Tri /></PanelLabel>
          </Panel>
          <Panel $w={45}>
            <PanelBody>
              <StackCol $w={45}>
                <Ic n="typeProps" w={32} />
                <BigBtn $on $center $w={38} $h={35}>
                  <Ic n="propsPanel" w={30} />
                </BigBtn>
              </StackCol>
            </PanelBody>
            <PanelLabel>属性</PanelLabel>
          </Panel>
          <Panel $w={77}>
            <PanelBody>
              <StackCol $w={50}>
                <Ic n="paste" w={30} />
                <TextBtn $dis $mt={9}>
                  <span>粘贴</span>
                  <DisTri $c="#aaa" />
                </TextBtn>
              </StackCol>
              <ToolCol $w={20} $ml={1}>
                <Small n="scissors" />
                <Small n="copy" />
                <Small n="match" />
              </ToolCol>
            </PanelBody>
            <PanelLabel>剪贴板</PanelLabel>
          </Panel>
          <Panel $w={170}>
            <PanelBody $pl={7}>
              <ToolCol $w={103}>
                <ToolRow $left><Ic n="joinCut" w={17} />连接端切割<TextTri /></ToolRow>
                <ToolRow $left><Ic n="cutGeom" w={17} />剪切<TextTri /></ToolRow>
                <ToolRow $left><Ic n="joinGeom" w={17} />连接<TextTri /></ToolRow>
              </ToolCol>
              <ToolCol $w={20}>
                <Small n="grayCut" />
                <Small n="beam" />
                <Small n="wallPen" />
              </ToolCol>
              <ToolCol $w={34} $ml={3}>
                <Small n="wallOpen" />
                <Small n="cutSwitch" dd />
                <Small n="hammer" />
              </ToolCol>
            </PanelBody>
            <PanelLabel>几何图形</PanelLabel>
          </Panel>
          <Panel $w={238}>
            <PanelBody $pl={3}>
              <BigGrid $cols={4} $cw={39}>
                <Ic n="align" w={30} /><Ic n="offset" w={30} /><Ic n="mirrorPick" w={30} /><Ic n="mirrorDraw" w={30} />
                <Ic n="move" w={30} /><Ic n="copyShape" w={30} /><Ic n="rotate" w={30} /><Ic n="trimBig" w={30} />
              </BigGrid>
              <ToolCol $w={25} $ml={3}>
                <Small n="split1" /><Small n="array" /><Small n="trim1" />
              </ToolCol>
              <ToolCol $w={25}>
                <Small n="split2" /><Small n="scale" /><Small n="trim2" />
              </ToolCol>
              <ToolCol $w={25}>
                <Small n="unpinG" /><Small n="pin" /><Small n="del" />
              </ToolCol>
            </PanelBody>
            <PanelLabel>修改</PanelLabel>
          </Panel>
          <Panel $w={65}>
            <PanelBody $pl={6}>
              <ToolCol $w={34}>
                <Small n="bulb" dd /><Small n="paint" dd /><ToolRow $left><Ic n="viewRange" w={17} /></ToolRow>
              </ToolCol>
              <ToolCol $w={20}>
                <Small n="gear3d" /><Small n="lines" />
              </ToolCol>
            </PanelBody>
            <PanelLabel>视图</PanelLabel>
          </Panel>
          <Panel $w={57}>
            <PanelBody>
              <BigGrid $cols={1} $cw={55} $ji="start">
                <BigCell><Ic n="alignDim" w={38} h={18} stretch /><Tri /></BigCell>
                <BigCell><Ic n="spot" w={30} /><Tri /></BigCell>
              </BigGrid>
            </PanelBody>
            <PanelLabel>测量</PanelLabel>
          </Panel>
          <Panel $w={81}>
            <PanelBody $pl={2}>
              <BigGrid $cols={2} $cw={38}>
                <Ic n="group" w={30} /><Ic n="compon" w={30} /><Ic n="stack" w={30} /><Ic n="groupFlow" w={30} />
              </BigGrid>
            </PanelBody>
            <PanelLabel>创建</PanelLabel>
          </Panel>
          <Panel $w={42} $ml={4} $ctx>
            <PanelBody>
              <StackCol $w={42}>
                <Ic n="editFam" w={30} />
                <TextBtn $mt={8}>
                  <span>编辑</span>
                  <span>族</span>
                </TextBtn>
              </StackCol>
            </PanelBody>
            <PanelLabel $ctx>模式</PanelLabel>
          </Panel>
          <Panel $w={45} $ml={2} $ctx>
            <PanelBody>
              <StackCol $w={45}>
                <Ic n="pickHost" w={32} />
                <TextBtn $mt={6}>
                  <span>拾取</span>
                  <span>新主体</span>
                </TextBtn>
              </StackCol>
            </PanelBody>
            <PanelLabel $ctx>主体</PanelLabel>
          </Panel>
        </Ribbon>
        <Options>{'修改 | 窗'}</Options>
        <Main>
          <Dock $w={342}>
            <DockHead $pl={3} $pr={6}>属性<X size={11} strokeWidth={3} /></DockHead>
            <PropsBody>
              <TypeSel>
                <Thumb><WindowThumb /></Thumb>
                <TypeName>固定<br />0915 x 1220mm</TypeName>
                <Tri $c="#555" />
              </TypeSel>
              <FilterRow>
                <FilterSel>
                  <span>窗 (1)</span>
                  <ChevronDown size={12} color="#888" />
                </FilterSel>
                <EditType><Ic n="typeProps" w={16} />编辑类型</EditType>
              </FilterRow>
              {propsData.map((r, i) =>
                r.g ? (
                  <GroupRow key={i}>{r.g}<ChevronsUp size={12} strokeWidth={2.5} /></GroupRow>
                ) : (
                  <PropRow key={i}>
                    <NameCell>{r.n}</NameCell>
                    <ValCell $active={r.active}>{r.v}</ValCell>
                    <KnobCell>{r.knob && <Knob />}</KnobCell>
                  </PropRow>
                )
              )}
              <PropsSpacer />
              <PropsFoot>
                <HelpLink>属性帮助</HelpLink>
                <Apply>应用</Apply>
              </PropsFoot>
            </PropsBody>
          </Dock>
          <CanvasCol>
            <Canvas>
              <Drawing />
              <WinCtl>
                <Ic n="cMin" w={12} />
                <Ic n="cRestore" w={12} />
                <Ic n="cClose" w={12} />
              </WinCtl>
              <NavBar><NavArt /></NavBar>
            </Canvas>
            <ViewBar>
              <ViewLeft>
                <ScaleText>{'1 : 100'}</ScaleText>
                <IconStrip
                  start={78}
                  h={13}
                  items={[
                    [87, 'vDetail', 15], [107, 'vCube', 15], [128, 'vSun', 15], [149, 'vShadow', 15], [170, 'vCrop', 15],
                    [190, 'vCrop2', 15], [211, 'vPath', 15], [233, 'vBulb', 13], [254, 'vRender', 15], [274, 'vHide', 15], [295, 'vLock', 15],
                  ]}
                />
              </ViewLeft>
              <MiniDash />
              <Grip />
            </ViewBar>
          </CanvasCol>
          <Dock $w={278}>
            <DockHead $pl={2} $pr={7}>项目浏览器 - 项目1<X size={11} strokeWidth={3} /></DockHead>
            <BrowserBody>
              <BrowserTop>
                <Tree>
                  <Guide $x={8} $top={0} />
                  <Guide $x={28} $top={0} />
                  <Guide $x={48} $top={720} />
                  {treeData.map((r, i) => (
                    <TreeItem key={i} r={r} />
                  ))}
                </Tree>
                <VGutter><VThumb /></VGutter>
              </BrowserTop>
              <HGutter><HThumb /></HGutter>
            </BrowserBody>
          </Dock>
        </Main>
        <Status>
          <StatusText>{'单击可进行选择; 按 Tab 键并单击可选择其他项目; 按 Ctrl 键并单击可将新项目添加到选择集; 按 Shift 键并单击可取消选择。'}</StatusText>
          <StatusInput $x={974} $w={188} />
          <StatusDrop $x={1162}><ChevronDown size={11} /></StatusDrop>
          <Zero>:0</Zero>
          <StatusInput $x={1291} $w={187}>主模型</StatusInput>
          <StatusDrop $x={1478}><ChevronDown size={11} /></StatusDrop>
          <IconStrip
            start={0}
            h={23}
            items={[
              [961, 'tools', 17], [1194, 'worksets', 16], [1249, 'modelList', 17], [1274, 'door', 17],
              [1683, 'tr1', 18], [1709, 'tr2', 18], [1735, 'tr3', 18], [1761, 'tr4', 18],
            ]}
          />
        </Status>
        <Stamp>
          <StampAt>@</StampAt>
          <StampCn $w={74}>刘</StampCn>
          <StampCn $w={72}>一</StampCn>
          <StampCn $w={65}>哥</StampCn>
          <StampLatin>GIS</StampLatin>
        </Stamp>
        <ImeBar>
          <ImeBlob />
          中
          <ImeDot>•,</ImeDot>
          ▦
        </ImeBar>
        <Csdn>{'CSDN @刘一哥GIS'}</Csdn>
      </Frame>
    </>
  );
}
